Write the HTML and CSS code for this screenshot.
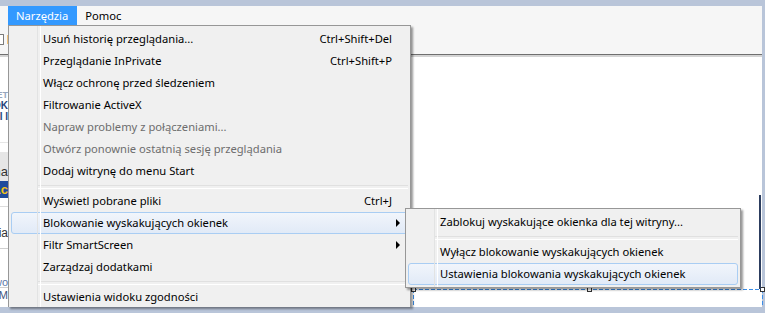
FILE: index.html
```html
<!DOCTYPE html>
<html lang="pl">
<head>
  <meta charset="UTF-8">
  <meta name="viewport" content="width=device-width, initial-scale=1.0">
  <title>Narzędzia</title>
  <link rel="stylesheet" href="styles.css">
</head>
<body>
  <div class="window">
    <div class="frame">
      <div class="menubar">
        <span class="menubar-item open">Narzędzia</span>
        <span class="menubar-item">Pomoc</span>
      </div>
      <div class="toolbar">
        <span class="tb-page"></span>
        <span class="tb-feed"></span>
      </div>
      <div class="page">
        <div class="page-edge">
          <div class="frag frag-et">NET</div>
          <div class="frag frag-k">OK</div>
          <div class="frag frag-i">I I</div>
          <div class="frag frag-rule"></div>
          <div class="frag frag-grey">Zna</div>
          <div class="frag frag-blue">Ac</div>
          <div class="frag frag-rule2"></div>
          <div class="frag frag-ia">Ria</div>
          <div class="frag frag-rule3"></div>
          <div class="frag frag-wo">wo</div>
          <div class="frag frag-rm">RM</div>
        </div>
      </div>
    </div>

    <!-- zaznaczony element strony -->
    <div class="selection">
      <span class="handle h-left"></span>
      <span class="handle h-mid"></span>
      <span class="handle h-right"></span>
    </div>
    <div class="page-scroll"></div>

    <div class="menu main-menu">
      <div class="item"><span class="label">Usuń historię przeglądania...</span><span class="key">Ctrl+Shift+Del</span></div>
      <div class="item"><span class="label">Przeglądanie InPrivate</span><span class="key">Ctrl+Shift+P</span></div>
      <div class="item"><span class="label">Włącz ochronę przed śledzeniem</span></div>
      <div class="item"><span class="label">Filtrowanie ActiveX</span></div>
      <div class="item disabled"><span class="label">Napraw problemy z połączeniami...</span></div>
      <div class="item disabled"><span class="label">Otwórz ponownie ostatnią sesję przeglądania</span></div>
      <div class="item"><span class="label">Dodaj witrynę do menu Start</span></div>
      <div class="separator"></div>
      <div class="item"><span class="label">Wyświetl pobrane pliki</span><span class="key">Ctrl+J</span></div>
      <div class="item hover"><span class="label">Blokowanie wyskakujących okienek</span><span class="arrow"></span></div>
      <div class="item"><span class="label">Filtr SmartScreen</span><span class="arrow"></span></div>
      <div class="item"><span class="label">Zarządzaj dodatkami</span></div>
      <div class="separator"></div>
      <div class="item"><span class="label">Ustawienia widoku zgodności</span></div>
    </div>

    <div class="menu sub-menu">
      <div class="item"><span class="label">Zablokuj wyskakujące okienka dla tej witryny...</span></div>
      <div class="separator"></div>
      <div class="item"><span class="label">Wyłącz blokowanie wyskakujących okienek</span></div>
      <div class="item hover"><span class="label">Ustawienia blokowania wyskakujących okienek</span></div>
    </div>
  </div>
</body>
</html>
```

FILE: styles.css
```css
* {
  box-sizing: border-box;
}

body {
  margin: 0;
  font-family: 'Noto Sans', 'Open Sans', sans-serif;
  font-size: 11.2px;
  color: #000;
}

.window {
  position: relative;
  width: 765px;
  height: 313px;
  padding: 6px 3px 6px 0;
  background: #b9c5d9;
  overflow: hidden;
}

.frame {
  height: 100%;
  display: flex;
  flex-direction: column;
  background: #fff;
}

.menubar {
  height: 19px;
  display: flex;
  padding-left: 8px;
  background: #f6f6f6;
}

.menubar-item {
  padding: 0 9px 0 8px;
  line-height: 19px;
}

.menubar-item.open {
  background: #3399ff;
  color: #fff;
}

.toolbar {
  position: relative;
  z-index: 1;
  height: 30px;
  display: flex;
  align-items: center;
  gap: 3px;
  background: #f6f6f6;
  border-bottom: 1px solid #6f6f6f;
  box-shadow: 0 2px 0 #d4d4d4;
}

.tb-page {
  width: 4px;
  height: 11px;
  border: 1px solid #7a7a7a;
  border-left: none;
  border-radius: 0 1px 1px 0;
  background: #fff;
}

.tb-feed {
  width: 2px;
  height: 9px;
  background: #f2c27a;
}

.page {
  flex: 1;
  display: flex;
}

.page-edge {
  width: 8px;
  display: flex;
  flex-direction: column;
  font-family: 'Liberation Sans', sans-serif;
  overflow: hidden;
}

.frag {
  display: flex;
  justify-content: flex-end;
  white-space: nowrap;
}

.frag-et {
  margin-top: 35px;
  height: 10px;
  font-size: 9px;
  font-weight: bold;
  line-height: 10px;
  color: #97a6bd;
}

.frag-k {
  height: 11px;
  font-size: 10px;
  font-weight: bold;
  line-height: 11px;
  color: #1f3f78;
}

.frag-i {
  height: 11px;
  font-size: 10px;
  font-weight: bold;
  line-height: 11px;
  color: #2a4a80;
}

.frag-rule {
  margin-top: 20px;
  height: 1px;
  background: #e6e6e6;
}

.frag-grey {
  margin-top: 9px;
  height: 29px;
  align-items: flex-end;
  padding-bottom: 2px;
  font-size: 13px;
  color: #333;
  background: #e6e6e6;
}

.frag-blue {
  height: 17px;
  font-size: 13px;
  font-weight: bold;
  line-height: 17px;
  color: #f3c315;
  background: #1e4b9c;
}

.frag-rule2 {
  margin-top: 8px;
  height: 1px;
  background: #dcdcdc;
}

.frag-ia {
  margin-top: 19px;
  height: 14px;
  font-size: 12px;
  line-height: 14px;
  color: #333;
}

.frag-rule3 {
  margin-top: 8px;
  height: 1px;
  background: #cfcfcf;
}

.frag-wo {
  margin-top: 27px;
  height: 12px;
  font-size: 11px;
  line-height: 12px;
  color: #5a78a8;
  border-bottom: 1px solid #d0d0d0;
}

.frag-rm {
  margin-top: 1px;
  height: 12px;
  font-size: 11px;
  line-height: 12px;
  color: #3f5680;
}

/* dashed box around the selected page element */
.selection {
  position: absolute;
  z-index: 2;
  left: 413px;
  top: 289px;
  width: 350px;
  height: 18px;
  background:
    linear-gradient(to right, #3b8de6 4px, transparent 4px) 0 0 / 6px 1px repeat-x,
    linear-gradient(to bottom, #3b8de6 4px, transparent 4px) 0 0 / 1px 6px repeat-y,
    linear-gradient(to bottom, #3b8de6 4px, transparent 4px) 100% 0 / 1px 6px repeat-y;
}

.handle {
  position: absolute;
  top: -2px;
  width: 5px;
  height: 5px;
  background: #fff;
  border: 1px solid #333;
}

.h-left { left: -2px; }
.h-mid { left: 174px; }
.h-right { right: -2px; }

.page-scroll {
  position: absolute;
  z-index: 2;
  left: 759px;
  top: 195px;
  width: 2px;
  height: 94px;
  background: #2c3d5e;
}

.menu {
  position: absolute;
  padding: 2px;
  background: #f0f0f0;
  border: 1px solid #979797;
  box-shadow: 2px 2px 2px rgba(0, 0, 0, 0.4);
}

/* icon gutter line, drawn over the hover box */
.menu::before {
  content: '';
  position: absolute;
  top: 0;
  bottom: 0;
  left: 28px;
  width: 2px;
  border-left: 1px solid #e2e3e3;
  border-right: 1px solid #fff;
  z-index: 1;
}

.main-menu {
  z-index: 3;
  left: 8px;
  top: 25px;
  width: 403px;
  height: 282px;
  border-bottom: none;
  overflow: hidden;
}

.sub-menu {
  z-index: 4;
  left: 405px;
  top: 208px;
  width: 336px;
}

.item {
  height: 22px;
  display: flex;
  align-items: center;
  padding-left: 31px;
  border: 1px solid transparent;
  border-radius: 3px;
  line-height: 20px;
  white-space: nowrap;
}

.item .label {
  flex: 1;
}

.item.disabled {
  color: #6d6d6d;
}

.item.hover {
  border-color: #a9cdf3;
  background: linear-gradient(to bottom, #f1f5fb, #e1eaf7);
}

.key {
  margin-right: 15px;
}

.arrow {
  width: 0;
  height: 0;
  margin-right: 7px;
  border-left: 4px solid #000;
  border-top: 4px solid transparent;
  border-bottom: 4px solid transparent;
}

.separator {
  height: 8px;
  margin-left: 27px;
  padding-top: 3px;
}

.separator::after {
  content: '';
  display: block;
  height: 2px;
  border-top: 1px solid #e0e0e0;
  border-bottom: 1px solid #fff;
}
```
